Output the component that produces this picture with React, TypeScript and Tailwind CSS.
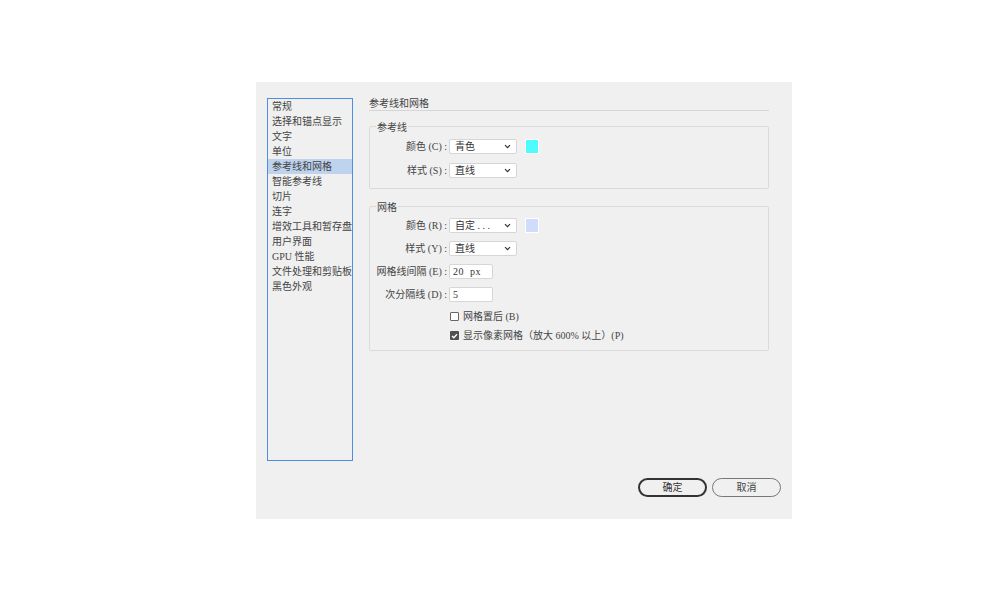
import { ReactNode } from 'react';

const FONT = '[font-family:"Liberation_Serif","Noto_Sans_CJK_SC",serif]';

const NAV_ITEMS = [
  '常规',
  '选择和锚点显示',
  '文字',
  '单位',
  '参考线和网格',
  '智能参考线',
  '切片',
  '连字',
  '增效工具和暂存盘',
  '用户界面',
  'GPU 性能',
  '文件处理和剪贴板',
  '黑色外观',
];

function Chevron() {
  return (
    <svg width="7" height="5" viewBox="0 0 7 5" className="shrink-0">
      <path d="M1 1.2 L3.5 3.7 L6 1.2" fill="none" stroke="#333" strokeWidth="1.2" />
    </svg>
  );
}

function Select({ value }: { value: string }) {
  return (
    <div className="ml-[2px] flex h-[15px] w-[68px] items-center justify-between rounded-[2px] border border-[#d6d6d6] bg-white pl-[5px] pr-[5px] text-[#333]">
      <span className="leading-none">{value}</span>
      <Chevron />
    </div>
  );
}

function Field({ value }: { value: string }) {
  return (
    <div className="ml-[2px] flex h-[15px] w-[44px] items-center rounded-[2px] border border-[#d6d6d6] bg-white pl-[3px] text-[#333]">
      <span className="whitespace-pre leading-none tracking-[0.5px]">{value}</span>
    </div>
  );
}

function Row({ label, children }: { label: string; children: ReactNode }) {
  return (
    <div className="flex h-[15px] items-center">
      <span className="w-[77px] shrink-0 whitespace-pre text-right leading-none text-[#444]">{label}</span>
      {children}
    </div>
  );
}

function Swatch({ color }: { color: string }) {
  return <div className={`ml-[8px] h-[15px] w-[14px] border border-white ${color}`} />;
}

function Group({ title, children, className }: { title: string; children: ReactNode; className: string }) {
  return (
    <div className={`relative rounded-[2px] border border-[#dadada] ${className}`}>
      <span className="absolute -top-[4px] left-[6px] bg-[#f0f0f0] px-[1px] leading-none text-[#444]">
        {title}
      </span>
      {children}
    </div>
  );
}

function CheckRow({ label, checked }: { label: string; checked?: boolean }) {
  return (
    <div className="ml-[80px] flex h-[15px] items-center gap-[4px]">
      {checked ? (
        <div className="flex h-[9px] w-[9px] items-center justify-center rounded-[1px] bg-[#505050]">
          <svg width="7" height="6" viewBox="0 0 7 6">
            <path d="M1 3 L2.8 4.8 L6 1.2" fill="none" stroke="white" strokeWidth="1.3" />
          </svg>
        </div>
      ) : (
        <div className="h-[9px] w-[9px] rounded-[1px] border border-[#666] bg-white" />
      )}
      <span className="whitespace-nowrap leading-none text-[#444]">{label}</span>
    </div>
  );
}

export default function App() {
  return (
    <div className={`min-h-[601px] w-[1000px] bg-white pl-[256px] pt-[82px] text-[10px] ${FONT}`}>
      <div className="flex h-[437px] w-[536px] flex-col bg-[#f0f0f0] px-[11px] pt-[16px]">
        <div className="flex gap-[16px]">
          <ul className="h-[363px] w-[86px] border border-[#4a8fe0]">
            {NAV_ITEMS.map((item) => (
              <li
                key={item}
                className={`flex h-[15px] items-center whitespace-nowrap pl-[4px] leading-none text-[#444] ${
                  item === '参考线和网格' ? 'bg-[#bdd3ee]' : ''
                }`}
              >
                {item}
              </li>
            ))}
          </ul>
          <div className="flex w-[400px] flex-col">
            <div className="h-[13px] border-b border-[#d6d6d6] leading-[12px] text-[#444]">参考线和网格</div>
            <Group title="参考线" className="mt-[15px] flex flex-col gap-[9px] pb-[10px] pt-[12px]">
              <Row label="颜色 (C) :">
                <Select value="青色" />
                <Swatch color="bg-[#4efcff]" />
              </Row>
              <Row label="样式 (S) :">
                <Select value="直线" />
              </Row>
            </Group>
            <Group title="网格" className="mt-[17px] flex flex-col pb-[7px] pt-[11px]">
              <div className="flex flex-col gap-[8px]">
                <Row label="颜色 (R) :">
                  <Select value="自定 . . ." />
                  <Swatch color="bg-[#cfdcfb]" />
                </Row>
                <Row label="样式 (Y) :">
                  <Select value="直线" />
                </Row>
                <Row label="网格线间隔 (E) :">
                  <Field value="20  px" />
                </Row>
                <Row label="次分隔线 (D) :">
                  <Field value="5" />
                </Row>
              </div>
              <div className="mt-[7px] flex flex-col gap-[4px]">
                <CheckRow label="网格置后 (B)" />
                <CheckRow label="显示像素网格（放大 600% 以上）(P)" checked />
              </div>
            </Group>
          </div>
        </div>
        <div className="mt-[17px] flex justify-end gap-[5px]">
          <button
            type="button"
            className="flex h-[19px] w-[69px] items-center justify-center rounded-full border-2 border-[#333] leading-none text-[#333]"
          >
            确定
          </button>
          <button
            type="button"
            className="flex h-[19px] w-[69px] items-center justify-center rounded-full border-[1.5px] border-[#777] leading-none text-[#444]"
          >
            取消
          </button>
        </div>
      </div>
    </div>
  );
}
